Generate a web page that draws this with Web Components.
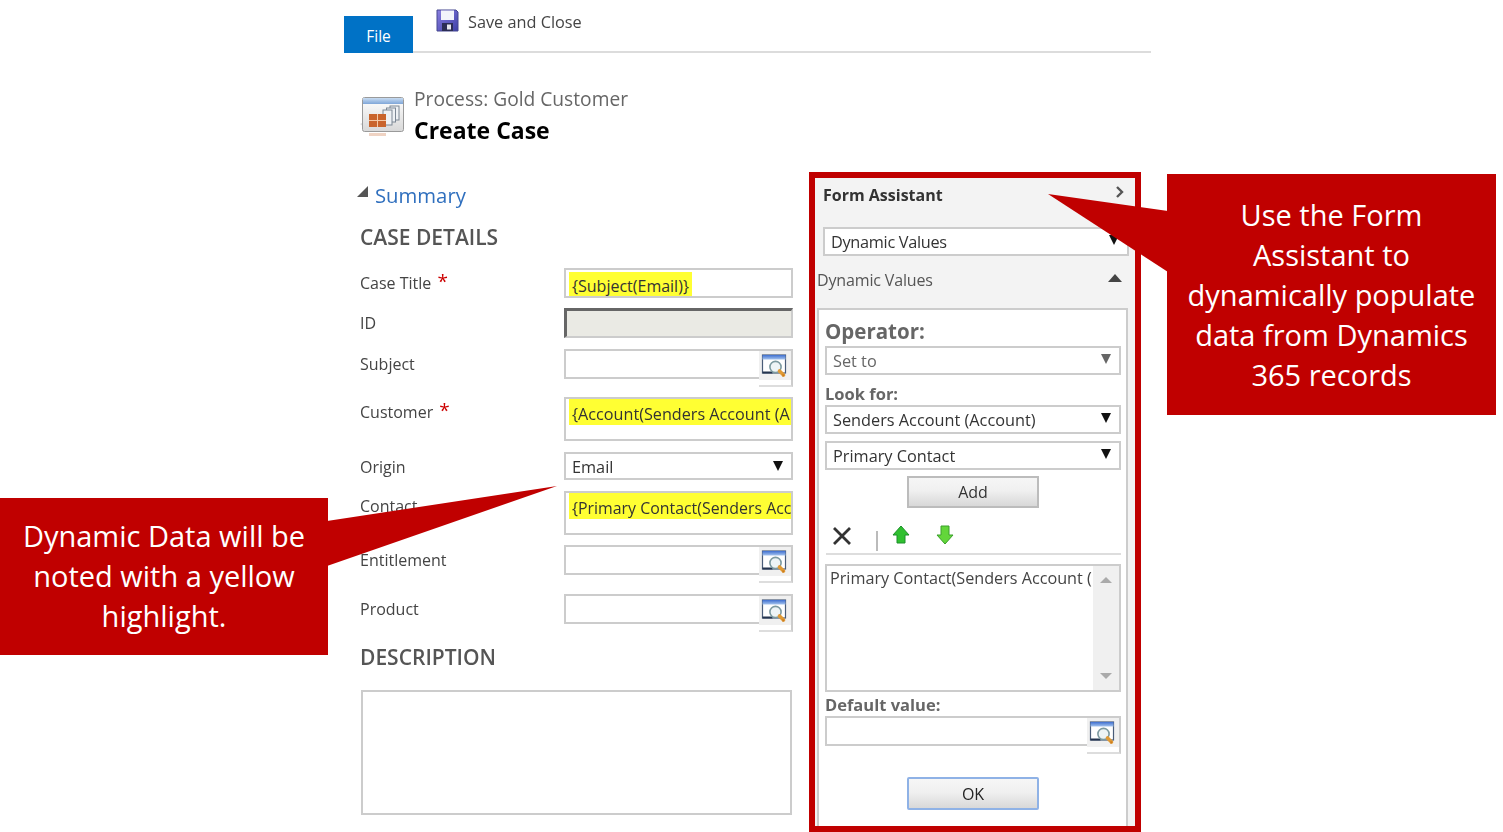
<!DOCTYPE html>
<html lang="en"><head><meta charset="utf-8"><title>Create Case</title>
<style>
html,body{margin:0;padding:0;background:#fff;overflow:hidden}
body{font-family:"Open Sans","Noto Sans",sans-serif;color:#444}
</style></head><body>
<crm-app>
  <crm-ribbon slot="ribbon">Save and Close</crm-ribbon>
  <crm-title slot="title" process="Process: Gold Customer">Create Case</crm-title>
  <crm-form slot="form">
    <crm-field label="Case Title" required><crm-input highlight>{Subject(Email)}</crm-input></crm-field>
    <crm-field label="ID"><crm-input disabled></crm-input></crm-field>
    <crm-field label="Subject" style="margin-top:1px"><crm-lookup></crm-lookup></crm-field>
    <crm-field label="Customer" required><crm-input tall highlight full style="font-size:16.200px">{Account(Senders Account (A</crm-input></crm-field>
    <crm-field label="Origin" style="margin-top:1px"><crm-select style="height:28px;padding-top:2px">Email</crm-select></crm-field>
    <crm-field label="Contact" style="margin-top:1px"><crm-input tall highlight full style="font-size:15.900px">{Primary Contact(Senders Acc</crm-input></crm-field>
    <crm-field label="Entitlement"><crm-lookup></crm-lookup></crm-field>
    <crm-field label="Product" style="margin-top:1px"><crm-lookup></crm-lookup></crm-field>
  </crm-form>
  <crm-assistant slot="assistant"></crm-assistant>
  <crm-callout slot="overlay" side="right">Use the Form<br>Assistant to<br>dynamically populate<br>data from Dynamics<br>365 records</crm-callout>
  <crm-callout slot="overlay" side="left">Dynamic Data will be<br>noted with a yellow<br>highlight.</crm-callout>
</crm-app>
<script>
const def=(name,css,html,init)=>{
  customElements.define(name,class extends HTMLElement{
    connectedCallback(){
      if(this.shadowRoot)return;
      const r=this.attachShadow({mode:'open'});
      r.innerHTML='<style>'+css+'</style>'+(typeof html==='function'?html(this):html);
      if(init)init(this,r);
    }
  });
};
const ICON_LOOKUP=`<svg width="27" height="24" viewBox="0 0 26 24"><defs><linearGradient id="lb" x1="0" y1="0" x2="0" y2="1"><stop offset="0" stop-color="#3f6fd0"/><stop offset="1" stop-color="#a5c4ee"/></linearGradient></defs>
<rect x="1" y="1" width="23" height="18" fill="#fff" stroke="#4a5c78" stroke-width="1.200"/><rect x="1" y="1" width="23" height="4.500" fill="url(#lb)"/><rect x="1" y="17.500" width="10" height="2" fill="#24344f"/>
<circle cx="14" cy="13" r="5.600" fill="#eef4f6" stroke="#7d9aa0" stroke-width="1.600"/><path d="M18 17l4 4" stroke="#e09a35" stroke-width="3.600" stroke-linecap="round"/><path d="M21 20l2 1-2 2z" fill="#c8771c"/></svg>`;

def('crm-app',`:host{display:block;position:relative;width:1503px;height:832px;overflow:hidden}
.shell{margin-left:344px;width:807px;display:flex;flex-direction:column;filter:blur(.35px)}
.body{display:flex;align-items:flex-start}
.formcol{width:465px;flex:none}`,
`<div class="shell"><slot name="ribbon"></slot><slot name="title"></slot><div class="body"><div class="formcol"><slot name="form"></slot></div><slot name="assistant"></slot></div></div><slot name="overlay"></slot>`);

def('crm-ribbon',`:host{display:flex;height:53px;box-sizing:border-box;border-bottom:2px solid #dcdcdc;position:relative;font-size:16px;color:#444}
.file{align-self:flex-end;margin-bottom:-2px;width:69px;height:37px;background:#0072c6;color:#fff;display:flex;align-items:center;justify-content:center;font-size:15.500px;padding-top:3px;box-sizing:border-box}
.save{display:flex;align-items:flex-start;margin-left:23px;padding-top:9px;gap:9px}
.t{line-height:26px;font-size:16.300px}`,
`<div class="file">File</div><div class="save"><svg width="23" height="23" viewBox="0 0 23 23"><defs><linearGradient id="f" x1="0" y1="0" x2="1" y2="1"><stop offset="0" stop-color="#8a7fe0"/><stop offset="1" stop-color="#3d3fa8"/></linearGradient></defs><path d="M1 1h19l2 2v19H1z" fill="url(#f)" stroke="#45468f"/><rect x="5" y="1.500" width="13" height="9.500" fill="#f3f4fb"/><rect x="6" y="14" width="11" height="8" fill="#2c2d55"/><rect x="11" y="15.500" width="4" height="5" fill="#e6e6ee"/></svg><span class="t"><slot></slot></span></div>`);

def('crm-title',`:host{display:flex;height:119px;box-sizing:border-box;padding:32px 0 0 16px}
svg{flex:none;margin-top:11px;margin-right:9px}
.tx{display:flex;flex-direction:column;margin-left:-1px}
.p{font-size:19.200px;line-height:28px;color:#666}
.c{font-size:23px;line-height:34px;font-weight:700;color:#000}`,
h=>`<svg width="46" height="42" viewBox="0 0 46 42"><defs><linearGradient id="w" x1="0" y1="0" x2="0" y2="1"><stop offset="0" stop-color="#fff"/><stop offset="1" stop-color="#d8d8d8"/></linearGradient><linearGradient id="b" x1="0" y1="0" x2="0" y2="1"><stop offset="0" stop-color="#c8dcf2"/><stop offset="1" stop-color="#7fa6d8"/></linearGradient></defs>
<path d="M0 28l4-2v5z" fill="#ddd"/><rect x="2.500" y="1.500" width="41" height="34" rx="2" fill="url(#w)" stroke="#9a9a9a"/><rect x="3" y="2" width="40" height="6" fill="url(#b)"/>
<g fill="#eef1f4" stroke="#7c8794"><rect x="30" y="10" width="9" height="14"/><rect x="26.500" y="12" width="9" height="14"/><rect x="23" y="14" width="9" height="15"/></g>
<rect x="9" y="18" width="17" height="13" fill="#c9642c"/><path d="M9 24.500h17M17.500 18v13" stroke="#f4c9a6" stroke-width="1"/>
<rect x="9" y="37" width="17" height="3" fill="#efd3c3"/></svg>
<div class="tx"><span class="p">${h.getAttribute('process')}</span><span class="c"><slot></slot></span></div>`);

def('crm-form',`:host{display:block;padding:9px 16px 0 16px;width:465px;box-sizing:border-box}
.sum{display:flex;align-items:center;height:28px;font-size:20.300px;color:#2f6fbe}
.tri{width:0;height:0;border-style:solid;border-width:0 0 11px 11px;border-color:transparent transparent #555 transparent;margin:-7px 7px 0 -3px}
h2{margin:0;font-weight:600;font-size:21px;line-height:30px;color:#555}
.a{margin-top:13px}
.rows{display:flex;flex-direction:column;gap:10px;margin-top:16px}
.d{margin-top:10px}
.ta{margin:18px 0 0 1px;width:431px;height:125px;box-sizing:border-box;border:2px solid #ccc;background:#fff}`,
`<div class="sum"><span class="tri"></span>Summary</div><h2 class="a">CASE DETAILS</h2><div class="rows"><slot></slot></div><h2 class="d">DESCRIPTION</h2><div class="ta"></div>`);

def('crm-field',`:host{display:grid;grid-template-columns:204px 229px;font-size:16px;color:#444}
.l{height:28px;line-height:30px;white-space:nowrap}
.r{color:#c00;font-size:19px;line-height:0;margin-left:2px;position:relative;top:-1px}`,
h=>`<div class="l">${h.getAttribute('label')}${h.hasAttribute('required')?' <span class="r">*</span>':''}</div><div><slot></slot></div>`);

def('crm-input',`:host{display:block;height:30px;box-sizing:border-box;border:2px solid #ccc;background:#fff;overflow:hidden;font-size:16px;color:#444;white-space:nowrap}
:host([tall]){height:44px}
:host([disabled]){background:#eaeae4;border-color:#ccc;border-top:3px solid #666;border-left:3px solid #666}
.h{display:inline-block;background:#ffff33;padding:0 3px;height:25px;line-height:28px;margin:2px 0 0 3px;color:#333;vertical-align:top}
:host([full]) .h{display:block;margin:0 -1px 0 3px;height:26px;line-height:30px;overflow:hidden;padding-right:0}`,
h=>h.hasAttribute('highlight')?`<span class="h"><slot></slot></span>`:`<slot></slot>`);

def('crm-lookup',`:host{display:block;position:relative;height:38px}
.box{height:30px;box-sizing:border-box;border:2px solid #ccc;background:#fff;margin-right:20px}
.btn{position:absolute;right:0;top:0;width:34px;height:38px;box-sizing:border-box;border-top:2px solid #ccc;border-right:2px solid #ccc;border-bottom:2px solid #ddd;background:linear-gradient(#f0f0f0,#f0f0f0) top/100% 29px no-repeat #fff;padding:3px 0 0 2px}
svg{display:block}`,
`<div class="box"></div><div class="btn">${ICON_LOOKUP}</div>`);

def('crm-select',`:host{display:flex;align-items:center;height:29px;box-sizing:border-box;border:2px solid #ccc;background:#fff;padding:0 8px 0 6px;font-size:16.300px;color:#333;white-space:nowrap}
:host([muted]){color:#666}
.s{flex:1}
.a{width:0;height:0;border-style:solid;border-width:10px 5px 0 5px;border-color:#111 transparent transparent transparent;margin-top:-3px}
:host([muted]) .a{border-top-color:#666}`,
`<span class="s"><slot></slot></span><span class="a"></span>`);

def('crm-button',`:host{display:flex;align-items:center;justify-content:center;width:132px;height:32px;box-sizing:border-box;border:2px solid #bcbcbc;background:linear-gradient(#f6f6f6,#f0f0f0 45%,#d8d8d8);font-size:16px;color:#333}
:host([primary]){height:33px;border-color:#8fb2e6;border-radius:2px;color:#222}`,
`<slot></slot>`);

def('crm-assistant',`:host{display:flex;flex-direction:column;width:332px;height:660px;box-sizing:border-box;border:6px solid #c00000;background:#f3f3f3;overflow:hidden;font-size:16px;color:#444;flex:none}
.hd{height:34px;display:flex;align-items:center;justify-content:space-between;padding:0 10px 0 8px;font-weight:700;color:#333;font-size:16px}
.hd svg{margin-top:-7px}
.sel{margin:15px 6px 0 8px;letter-spacing:-.3px}
.dv{height:24px;margin:12px 0 0 2px;padding-right:13px;display:flex;align-items:center;justify-content:space-between;color:#555;letter-spacing:-.15px}
.up{width:0;height:0;border-style:solid;border-width:0 7.500px 8px 7.500px;border-color:transparent transparent #444 transparent;margin-top:-4px}
.box{margin:16px 7px 0 2px;flex:1;background:#fff;border:2px solid #ccc;border-bottom:0;padding:9px 5px 0 6px;display:flex;flex-direction:column;align-items:stretch}
.op{font-size:20.500px;font-weight:700;line-height:24px;color:#666}
.lb{font-size:16.500px;font-weight:700;line-height:20px;color:#666}
.add{align-self:center;margin:6px 0 0 0}
.tb{height:47px;box-sizing:border-box;border-bottom:2px solid #ddd;position:relative;display:flex;align-items:flex-start;padding:18px 0 0 6px;margin-left:1px}
.sp{width:2px;height:20px;background:#bbb;margin:5px 14px 0 24px}
.list{margin-top:9px;height:128px;box-sizing:border-box;border:2px solid #ccc;background:#fff;display:flex}
.lt{flex:1;overflow:hidden;white-space:nowrap;padding:0 0 0 3px;line-height:24px;color:#444;font-size:16.200px}
.sb{width:26px;background:#f0f0f0;display:flex;flex-direction:column;justify-content:space-between;align-items:center;padding:11px 0 11px 0;box-sizing:border-box}
.u,.n{width:0;height:0;border-style:solid}
.u{border-width:0 6px 6px 6px;border-color:transparent transparent #aaa transparent}
.n{border-width:6px 6px 0 6px;border-color:#aaa transparent transparent transparent}
.def{margin-top:3px}
.lk{margin-top:1px}
.ok{align-self:center;margin:23px 0 0 0}`,
`<div class="hd"><span>Form Assistant</span><svg width="10" height="12" viewBox="0 0 10 12"><path d="M2 1l5 5-5 5" fill="none" stroke="#555" stroke-width="2.400"/></svg></div>
<crm-select class="sel">Dynamic Values</crm-select>
<div class="dv"><span>Dynamic Values</span><span class="up"></span></div>
<div class="box">
<div class="op">Operator:</div><crm-select muted style="margin-top:3px">Set to</crm-select>
<div class="lb" style="margin-top:9px">Look for:</div><crm-select style="margin-top:1px">Senders Account (Account)</crm-select>
<crm-select style="margin-top:7px">Primary Contact</crm-select>
<crm-button class="add">Add</crm-button>
<div class="tb"><svg width="20" height="20" viewBox="0 0 20 20"><path d="M2 2l16 16M18 2L2 18" stroke="#333" stroke-width="2.800"/></svg><span class="sp"></span>
<svg width="18" height="20" viewBox="0 0 18 20" style="margin-top:-1px"><path d="M9 1l8 9h-4v8H5v-8H1z" fill="#2fc02f" stroke="#1c8f2a"/></svg>
<svg width="18" height="20" viewBox="0 0 18 20" style="margin:-1px 0 0 26px"><path d="M5 1h8v9h4l-8 9-8-9h4z" fill="#63d63a" stroke="#3a9f2a"/></svg></div>
<div class="list"><div class="lt">Primary Contact(Senders Account (</div><div class="sb"><span class="u"></span><span class="n"></span></div></div>
<div class="lb def">Default value:</div><crm-lookup class="lk"></crm-lookup>
<crm-button class="ok" primary>OK</crm-button>
</div>`);

def('crm-callout',`:host{position:absolute;display:flex;align-items:center;justify-content:center;text-align:center;background:#c00000;color:#fff;font-size:29px;line-height:40px;box-sizing:border-box;white-space:nowrap}
:host([side=right]){left:1167px;top:174px;width:329px;height:241px;padding-top:1px}
:host([side=left]){left:0;top:498px;width:328px;height:157px;padding-bottom:2px}
svg{position:absolute;overflow:visible;left:0;top:0}`,
h=>`<svg width="1" height="1">${h.getAttribute('side')==='right'?'<path d="M1 37L-119 20L1 98z" fill="#c00000"/>':'<path d="M327 23L557 -12L327 68z" fill="#c00000"/>'}</svg><div><slot></slot></div>`);
</script>
</body></html>
